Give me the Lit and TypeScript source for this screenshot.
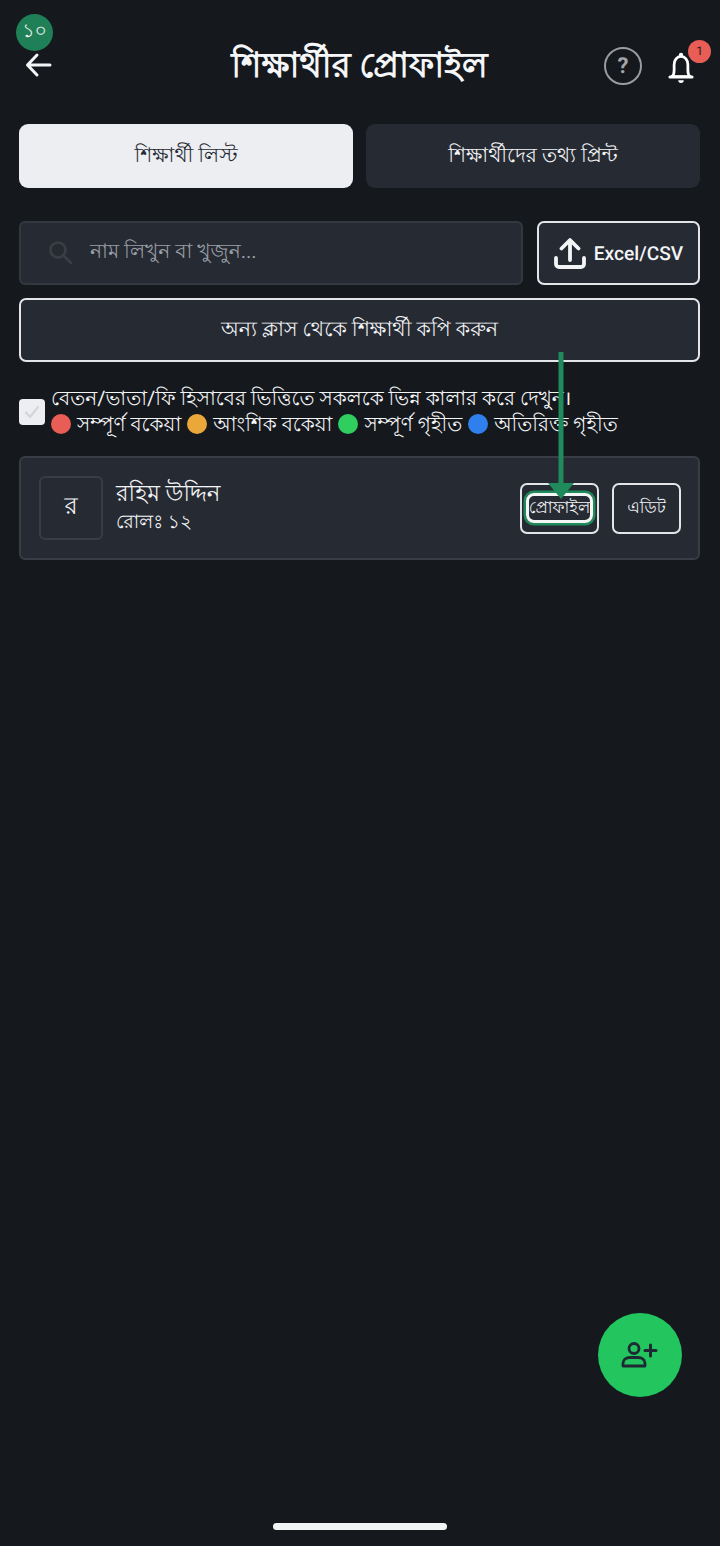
import { LitElement, html, css, svg } from 'lit';
import { customElement } from 'lit/decorators.js';

const legend = [
  { color: '#e85d56', label: 'সম্পূর্ণ বকেয়া' },
  { color: '#eba83a', label: 'আংশিক বকেয়া' },
  { color: '#2fce5f', label: 'সম্পূর্ণ গৃহীত' },
  { color: '#2f80ed', label: 'অতিরিক্ত গৃহীত' },
];

const backIcon = svg`<path d="M25 13H3M12 3L2.500 13L12 23" fill="none" stroke="#f3f4f6" stroke-width="3" stroke-linecap="round" stroke-linejoin="round"/>`;
const bellIcon = svg`<path d="M4 29c2-1.500 2.500-4 2.500-7v-6c0-5 3-9 7.500-9s7.500 4 7.500 9v6c0 3 .5 5.500 2.500 7z" fill="none" stroke="#fff" stroke-width="3" stroke-linejoin="round"/><path d="M2 29.500h24" stroke="#fff" stroke-width="3.400" stroke-linecap="round"/><circle cx="14" cy="5.500" r="2.400" fill="#fff"/><path d="M11 33a3 3 0 0 0 6 0z" fill="#fff"/>`;
const uploadIcon = svg`<path d="M16 23V4M7.500 11.500L16 3l8.500 8.500" fill="none" stroke="#f3f4f6" stroke-width="3.800" stroke-linecap="round" stroke-linejoin="round"/><path d="M2 21v6a3 3 0 0 0 3 3h22a3 3 0 0 0 3-3v-6" fill="none" stroke="#f3f4f6" stroke-width="3.800" stroke-linecap="round"/>`;
const searchIcon = svg`<circle cx="10" cy="10" r="7.500" fill="none" stroke="#3a3e45" stroke-width="2.600"/><path d="M15.500 15.500L23 23" stroke="#3a3e45" stroke-width="2.600" stroke-linecap="round"/>`;
const checkIcon = svg`<path d="M3 8.500l4 4.500 8-10" fill="none" stroke="#d3d5d9" stroke-width="2.200" stroke-linecap="round" stroke-linejoin="round"/>`;
const addUserIcon = svg`<circle cx="13" cy="8.500" r="5" fill="none" stroke="#1f2933" stroke-width="2.800"/><path d="M2 26v-2.500c0-3.500 3-6 7-6h8c4 0 7 2.500 7 6V26z" fill="none" stroke="#1f2933" stroke-width="2.800" stroke-linejoin="round"/><path d="M24 10.500h11M29.500 5v11" stroke="#1f2933" stroke-width="3" stroke-linecap="round"/>`;

@customElement('app-root')
export class AppRoot extends LitElement {
  static styles = css`
    :host {
      display: block;
      position: relative;
      height: 1546px;
      overflow: hidden;
      background: #15181d;
      color: #f3f4f6;
      font-family: Roboto, 'Noto Sans', sans-serif;
      /* keeps fractional font sizes from snapping to whole pixels */
      text-rendering: geometricPrecision;
    }

    .header {
      display: flex;
      align-items: center;
      height: 64px;
      padding: 34px 20px 0 25px;
    }

    .back {
      width: 28px;
      height: 26px;
      display: block;
      margin-top: -2px;
    }

    .title {
      flex: 1;
      margin: 0;
      text-align: center;
      font-size: 34.500px;
      font-weight: 700;
      color: #f5f6f7;
      padding: 3px 0 0 62px;
      white-space: nowrap;
    }

    .help {
      width: 38px;
      height: 38px;
      box-sizing: border-box;
      border: 2px solid #9a9c9f;
      border-radius: 50%;
      display: flex;
      align-items: center;
      justify-content: center;
      color: #a3a5a8;
      font-size: 22px;
      font-weight: 700;
      margin-right: 26px;
    }

    .bell {
      position: relative;
      width: 26px;
      height: 33px;
      margin-right: 6px;
    }

    .bell svg {
      display: block;
    }

    .bell-count {
      position: absolute;
      top: -10px;
      right: -17px;
      width: 23px;
      height: 23px;
      border-radius: 50%;
      background: #e85d56;
      color: #2a1a1a;
      font-size: 12px;
      display: flex;
      align-items: center;
      justify-content: center;
    }

    .tabs {
      display: grid;
      grid-template-columns: 334px 334px;
      gap: 13px;
      margin: 26px 20px 0 19px;
    }

    .tab {
      height: 64px;
      box-sizing: border-box;
      padding-top: 2px;
      border-radius: 9px;
      background: #262a33;
      display: flex;
      align-items: center;
      justify-content: center;
      font-size: 20.200px;
      color: #f3f4f6;
    }

    .tab.active {
      background: #eceef2;
      color: #262a33;
    }

    .search-row {
      display: flex;
      gap: 14px;
      margin: 33px 20px 0 19px;
    }

    .search {
      flex: 1;
      height: 64px;
      box-sizing: border-box;
      border: 2px solid #33373f;
      border-radius: 6px;
      background: #262a33;
      display: flex;
      align-items: center;
      gap: 16px;
      padding-left: 27px;
      font-size: 20.200px;
      color: #9a9ea5;
    }

    .upload {
      width: 163px;
      height: 64px;
      box-sizing: border-box;
      border: 2px solid #e3e5e8;
      border-radius: 7px;
      background: #262a33;
      display: flex;
      align-items: center;
      justify-content: center;
      gap: 8px;
      font-size: 19.200px;
      font-weight: 500;
    }

    .copy {
      height: 64px;
      box-sizing: border-box;
      padding-top: 2px;
      margin: 13px 20px 0 19px;
      border: 2px solid #e3e5e8;
      border-radius: 7px;
      background: #262a33;
      display: flex;
      align-items: center;
      justify-content: center;
      font-size: 20.500px;
    }

    .colors {
      display: flex;
      align-items: center;
      gap: 6px;
      margin: 23px 0 0 19px;
    }

    .check {
      width: 26px;
      height: 26px;
      box-sizing: border-box;
      margin-top: 2px;
      border-radius: 4px;
      background: #eceef2;
      display: flex;
      align-items: center;
      justify-content: center;
      flex-shrink: 0;
    }

    .colors-text {
      font-size: 20px;
      line-height: 26px;
      color: #f3f4f6;
      white-space: nowrap;
    }

    .legend {
      display: flex;
      align-items: center;
      gap: 6px;
    }

    .dot {
      width: 20px;
      height: 20px;
      border-radius: 50%;
    }

    .card {
      display: flex;
      align-items: center;
      height: 104px;
      box-sizing: border-box;
      margin: 19px 20px 0 19px;
      padding: 0 17px 0 18px;
      border: 2px solid #383c44;
      border-radius: 6px;
      background: #262a33;
    }

    .avatar {
      width: 64px;
      height: 64px;
      box-sizing: border-box;
      border: 2px solid #383c44;
      border-radius: 6px;
      display: flex;
      align-items: center;
      justify-content: center;
      font-size: 24px;
    }

    .info {
      flex: 1;
      margin-left: 13px;
      padding-bottom: 2px;
    }

    .name {
      font-size: 22.900px;
      line-height: 30px;
    }

    .roll {
      font-size: 18.700px;
      line-height: 26px;
    }

    .action {
      height: 51px;
      box-sizing: border-box;
      border: 2px solid #e3e5e8;
      border-radius: 7px;
      display: flex;
      align-items: center;
      justify-content: center;
      font-size: 16.500px;
    }

    .action.profile {
      width: 79px;
      margin-right: 13px;
      position: relative;
    }

    .action.edit {
      width: 69px;
    }

    /* tutorial overlay */
    .step {
      position: absolute;
      left: 16px;
      top: 14px;
      width: 37px;
      height: 37px;
      border-radius: 50%;
      background: #1f7f57;
      color: #eef3f0;
      font-size: 19px;
      display: flex;
      align-items: center;
      justify-content: center;
    }

    .ring {
      position: absolute;
      left: 4px;
      top: 8px;
      width: 67px;
      height: 30px;
      box-sizing: border-box;
      border: 3px solid #f5f7f6;
      border-radius: 8px;
      box-shadow: 0 0 0 2.500px #1f8a5b;
    }

    .arrow {
      position: absolute;
      left: 540px;
      top: 352px;
      display: block;
    }

    .fab {
      position: absolute;
      left: 598px;
      top: 1313px;
      width: 84px;
      height: 84px;
      border-radius: 50%;
      background: #22c55e;
      display: flex;
      align-items: center;
      justify-content: center;
    }

    .home-bar {
      position: absolute;
      left: 273px;
      top: 1523px;
      width: 174px;
      height: 7px;
      border-radius: 4px;
      background: #f3f4f6;
    }
  `;

  render() {
    return html`
      <div class="header">
        <svg class="back" viewBox="0 0 28 26">${backIcon}</svg>
        <h1 class="title">শিক্ষার্থীর প্রোফাইল</h1>
        <div class="help">?</div>
        <div class="bell">
          <svg width="26" height="33" viewBox="0 0 28 36">${bellIcon}</svg>
          <div class="bell-count">1</div>
        </div>
      </div>

      <div class="tabs">
        <div class="tab active">শিক্ষার্থী লিস্ট</div>
        <div class="tab">শিক্ষার্থীদের তথ্য প্রিন্ট</div>
      </div>

      <div class="search-row">
        <div class="search">
          <svg width="26" height="26" viewBox="0 0 26 26">${searchIcon}</svg>
          <span>নাম লিখুন বা খুজুন...</span>
        </div>
        <div class="upload">
          <svg width="32" height="32" viewBox="0 0 32 32">${uploadIcon}</svg>
          <span>Excel/CSV</span>
        </div>
      </div>

      <div class="copy">অন্য ক্লাস থেকে শিক্ষার্থী কপি করুন</div>

      <div class="colors">
        <div class="check">
          <svg width="18" height="16" viewBox="0 0 18 16">${checkIcon}</svg>
        </div>
        <div class="colors-text">
          <div>বেতন/ভাতা/ফি হিসাবের ভিত্তিতে সকলকে ভিন্ন কালার করে দেখুন।</div>
          <div class="legend">
            ${legend.map(
              (item) => html`
                <span class="dot" style="background: ${item.color}"></span>
                <span>${item.label}</span>
              `
            )}
          </div>
        </div>
      </div>

      <div class="card">
        <div class="avatar">র</div>
        <div class="info">
          <div class="name">রহিম উদ্দিন</div>
          <div class="roll">রোলঃ ১২</div>
        </div>
        <div class="action profile">
          প্রোফাইল
          <div class="ring"></div>
        </div>
        <div class="action edit">এডিট</div>
      </div>

      <div class="step">১০</div>
      <svg class="arrow" width="42" height="150" viewBox="0 0 42 150">
        <path d="M21 0V136" stroke="#1f8a5b" stroke-width="5"/>
        <path d="M8 131H34L21 147z" fill="#1f8a5b"/>
      </svg>

      <div class="fab">
        <svg width="38" height="30" viewBox="0 0 38 30">${addUserIcon}</svg>
      </div>
      <div class="home-bar"></div>
    `;
  }
}
